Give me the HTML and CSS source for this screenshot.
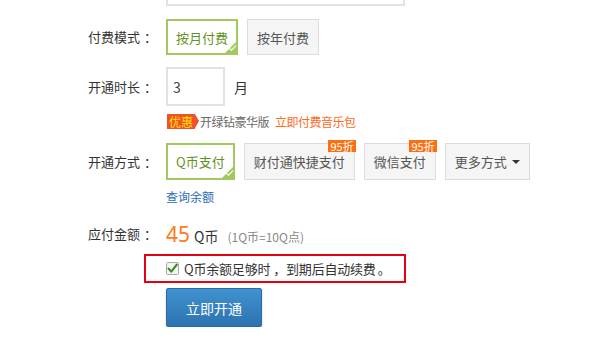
FILE: index.html
```html
<!DOCTYPE html>
<html lang="zh">
<head>
<meta charset="utf-8">
<link rel="stylesheet" href="styles.css">
</head>
<body>
<div class="form">
  <div class="prev-field"></div>

  <div class="row row-mode">
    <div class="label">付费模式<span class="colon">：</span></div>
    <div class="opts">
      <span class="opt selected">按月付费<i class="tick"></i></span>
      <span class="opt">按年付费</span>
    </div>
  </div>

  <div class="row row-len">
    <div class="label">开通时长<span class="colon">：</span></div>
    <div class="len-box">3</div>
    <span class="unit">月</span>
  </div>

  <div class="promo">
    <span class="promo-tag">优惠</span>
    <span class="promo-text">开绿钻豪华版</span>
    <span class="promo-link">立即付费音乐包</span>
  </div>

  <div class="row row-pay">
    <div class="label">开通方式<span class="colon">：</span></div>
    <div class="opts">
      <span class="opt tall selected">Q币支付<i class="tick"></i></span>
      <span class="opt tall">财付通快捷支付<b class="disc">95折</b></span>
      <span class="opt tall">微信支付<b class="disc">95折</b></span>
      <span class="opt tall">更多方式<i class="caret"></i></span>
    </div>
  </div>

  <div class="balance">查询余额</div>

  <div class="row row-amount">
    <div class="label">应付金额<span class="colon">：</span></div>
    <span class="amount">45</span>
    <span class="coin">Q币</span>
    <span class="rate">(1Q币=10Q点)</span>
  </div>

  <div class="renew">
    <svg class="chk" width="13" height="13" viewBox="0 0 13 13">
      <rect x="0.5" y="0.5" width="12" height="12" rx="1" fill="#f4f4f4" stroke="#a8a8a8"/>
      <path d="M2.6 6.6 L5.2 9.6 L10.8 2.6" fill="none" stroke="#3f8a1c" stroke-width="2.2" stroke-linecap="round" stroke-linejoin="round"/>
    </svg>
    <span class="renew-text">Q币余额足够时<span class="comma">，</span>到期后自动续费<span class="period">。</span></span>
  </div>

  <div class="submit-row">
    <span class="submit">立即开通</span>
  </div>
</div>
</body>
</html>
```

FILE: styles.css
```css
html, body {
  margin: 0;
  padding: 0;
  background: #fff;
}
body {
  font-family: "Noto Sans CJK SC", "Noto Sans", sans-serif;
  color: #333;
  font-size: 13px;
}
.form {
  padding-left: 88px;
}
.prev-field {
  margin-left: 78px;
  width: 235px;
  height: 4px;
  border: 2px solid #e2e2e2;
  border-top: none;
}
.row {
  display: flex;
  align-items: center;
}
.label {
  width: 78px;
  flex: none;
  font-size: 13px;
  line-height: 18px;
  color: #333;
}
.colon {
  margin-left: 4px;
}
.opts {
  display: flex;
  gap: 9px;
}
.opt {
  position: relative;
  box-sizing: border-box;
  height: 36px;
  padding: 0 9px;
  display: flex;
  align-items: center;
  border: 1px solid #dcdcdc;
  background: #f5f5f5;
  color: #555;
  font-size: 13px;
}
.opt.tall {
  height: 37px;
}
.opt.selected {
  border: 2px solid #a2c95f;
  background: #fff;
  color: #5f9326;
  padding: 0 8px;
}
.tick {
  position: absolute;
  right: -2px;
  bottom: -2px;
  width: 0;
  height: 0;
  border-left: 15px solid transparent;
  border-bottom: 15px solid #a2c95f;
}
.tick::after {
  content: "";
  position: absolute;
  right: 2px;
  top: 5px;
  width: 6px;
  height: 3px;
  border-left: 1.5px solid #fff;
  border-bottom: 1.5px solid #fff;
  transform: rotate(-45deg);
}
.disc {
  position: absolute;
  right: -2px;
  top: -4px;
  height: 12px;
  padding: 0 2px;
  background: #ff6f0f;
  color: #fff;
  font-weight: normal;
  font-size: 11px;
  line-height: 12px;
}
.caret {
  margin-left: 5px;
  width: 0;
  height: 0;
  border-left: 4px solid transparent;
  border-right: 4px solid transparent;
  border-top: 4px solid #333;
}
.row-mode {
  margin-top: 13px;
}
.row-len {
  margin-top: 12px;
}
.len-box {
  box-sizing: border-box;
  width: 59px;
  height: 39px;
  border: 2px solid #e2e2e2;
  padding-left: 5px;
  display: flex;
  align-items: center;
  font-size: 14px;
  color: #444;
}
.unit {
  margin-left: 9px;
  font-size: 14px;
  color: #333;
}
.promo {
  margin-top: 8px;
  margin-left: 79px;
  display: flex;
  align-items: center;
  height: 15px;
  font-size: 12px;
}
.promo-tag {
  position: relative;
  height: 15px;
  line-height: 15px;
  padding: 0 2px;
  background: #f2522a;
  color: #ffe300;
  font-size: 12px;
}
.promo-tag::after {
  content: "";
  position: absolute;
  right: -4px;
  top: 0;
  border-top: 7.5px solid transparent;
  border-bottom: 7.5px solid transparent;
  border-left: 4px solid #f2522a;
}
.promo-text {
  margin-left: 5px;
  color: #666;
  letter-spacing: -0.5px;
}
.promo-link {
  margin-left: 6px;
  color: #ff6a1e;
  letter-spacing: -0.5px;
}
.row-pay {
  margin-top: 14px;
}
.balance {
  margin-top: 9px;
  margin-left: 78px;
  font-size: 12px;
  line-height: 15px;
  color: #2b6cb3;
}
.row-amount {
  margin-top: 19px;
  height: 22px;
  align-items: baseline;
}
.row-amount .label {
  align-self: center;
}
.amount {
  font-family: "Noto Sans", sans-serif;
  font-size: 21px;
  line-height: 22px;
  color: #ff7a1c;
}
.coin {
  margin-left: 4px;
  font-size: 14px;
  color: #333;
}
.rate {
  margin-left: 9px;
  font-size: 12px;
  color: #888;
}
.renew {
  box-sizing: border-box;
  margin-top: 9px;
  margin-left: 56px;
  width: 262px;
  height: 29px;
  border: 2px solid #e60012;
  padding-left: 20px;
  display: flex;
  align-items: center;
}
.chk {
  flex: none;
}
.renew-text {
  margin-left: 5px;
  font-size: 13px;
  color: #333;
  letter-spacing: -0.2px;
}
.comma {
  margin-left: 3px;
}
.period {
  margin-left: 2px;
}
.submit-row {
  margin-top: 5px;
  margin-left: 78px;
}
.submit {
  box-sizing: border-box;
  display: flex;
  align-items: center;
  justify-content: center;
  width: 96px;
  height: 39px;
  border-radius: 2px;
  border: 1px solid #2c6aa6;
  background: linear-gradient(#3f93cf, #2d72b1);
  box-shadow: 0 1px 2px rgba(0,0,0,0.25);
  color: #fff;
  font-size: 14px;
}
```
